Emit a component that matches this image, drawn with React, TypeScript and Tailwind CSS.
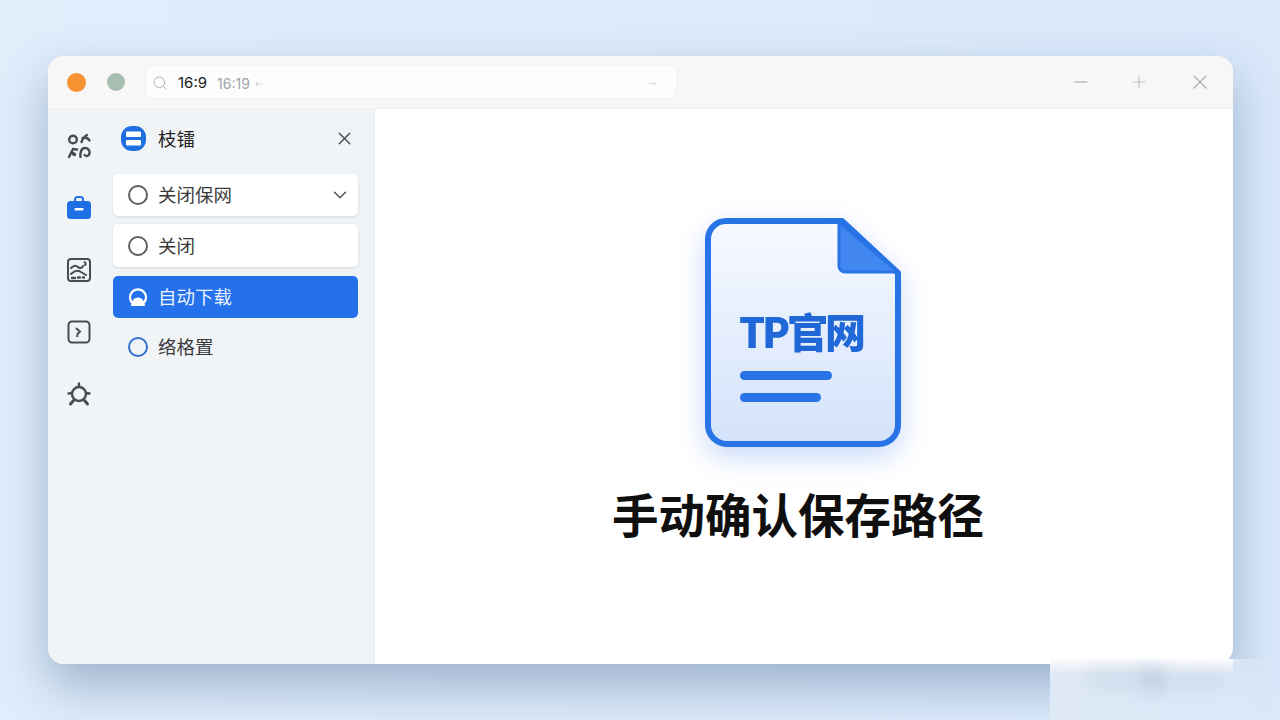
import { ChevronDown, Minus, Plus, Search, X } from 'lucide-react';

const cjk = { fontFamily: '"Noto Sans CJK SC", "Noto Sans", sans-serif' };

function Ring({ blue }: { blue?: boolean }) {
  return (
    <span
      className={
        blue
          ? 'h-5 w-5 shrink-0 rounded-full border-2 border-[#2f6fd0]'
          : 'h-5 w-5 shrink-0 rounded-full border-2 border-[#5f5f5f]'
      }
    />
  );
}

function RailIcons() {
  return (
    <div className="flex flex-col items-center gap-[36px] pt-[24px] pr-[4px] text-[#484b50]">
      <svg width="26" height="26" viewBox="0 0 26 26" fill="none" stroke="currentColor" strokeWidth="2.4" strokeLinecap="round">
        <circle cx="7" cy="6.500" r="3.800" />
        <path d="M15.500 9c1-3 3-5.500 5.500-7M16.500 5c3-.5 6 .5 7 2.500" />
        <path d="M3 24l4-8 4 .5" />
        <path d="M7 20.500l1.500 1" strokeWidth="3.400" />
        <path d="M14.500 24c-.5-4 .5-9 4.500-9 3 0 5 2.500 4.500 5.500s-3.500 3-5 1.500" />
      </svg>
      <svg width="26" height="26" viewBox="0 0 26 26" fill="none">
        <path d="M9 7V4.500A2.500 2.500 0 0 1 11.500 2h3A2.500 2.500 0 0 1 17 4.500V7" stroke="#1f6fe5" strokeWidth="2.200" />
        <rect x="1" y="6" width="24" height="18" rx="3.500" fill="#1f6fe5" />
        <rect x="8.500" y="13" width="9" height="2.600" rx="1" fill="#fff" />
      </svg>
      <svg width="26" height="26" viewBox="0 0 26 26" fill="none" stroke="currentColor" strokeWidth="2" strokeLinecap="round">
        <rect x="2" y="2" width="22" height="22" rx="3" />
        <path d="M5 11c3-3 5-3 7-1s4 1 5-1M18.500 5c1.500 1 1.500 2.500.5 3M5 17c3-3 7-4 10-2l5 3" />
        <path d="M6 21h3M12 20.500h2M17 20.500h1" strokeWidth="2.400" />
      </svg>
      <svg width="26" height="26" viewBox="0 0 26 26" fill="none" stroke="currentColor" strokeWidth="2" strokeLinecap="round">
        <rect x="2.500" y="2.500" width="21" height="21" rx="3.500" />
        <path d="M10.500 9.500l3.500 3-2.500 2.500M11 17h.5" />
      </svg>
      <svg width="26" height="26" viewBox="0 0 26 26" fill="none" stroke="currentColor" strokeLinecap="round">
        <circle cx="13" cy="13" r="7" strokeWidth="2.400" />
        <path d="M13 2.500v3M2.500 12.500l3.500-.5M23.500 12.500l-3.500-.5" strokeWidth="2.400" />
        <path d="M4.500 23l3-3.500M21.500 23l-3-3.500" strokeWidth="3" />
      </svg>
    </div>
  );
}

function DocIcon() {
  return (
    <svg width="196" height="229" viewBox="0 0 196 229" className="drop-shadow-[0_10px_14px_rgba(60,120,235,0.28)]">
      <defs>
        <linearGradient id="page" x1="0" y1="0" x2="0" y2="1">
          <stop offset="0" stopColor="#f7faff" />
          <stop offset="1" stopColor="#d3e2fa" />
        </linearGradient>
      </defs>
      <path
        d="M21 3H137L193 55V207a19 19 0 0 1-19 19H22A19 19 0 0 1 3 207V21A18 18 0 0 1 21 3Z"
        fill="url(#page)"
        stroke="#2874e6"
        strokeWidth="6"
        strokeLinejoin="round"
      />
      <path d="M134 4L193 54H140a6 6 0 0 1-6-6Z" fill="#4287f0" stroke="#2874e6" strokeWidth="3" strokeLinejoin="round" />
      <text x="34" y="130" fontSize="41" fontWeight="900" fill="#2068d8" style={cjk} textLength="127">
        TP官网
      </text>
      <rect x="35" y="153" width="92" height="9" rx="4.500" fill="#2874e6" />
      <rect x="35" y="175" width="81" height="9" rx="4.500" fill="#2874e6" />
    </svg>
  );
}

export default function App() {
  return (
    <div className="relative h-[720px] w-[1280px] overflow-hidden bg-[linear-gradient(100deg,#e0edfb,#d9e8fa)] pt-[56px] pl-[48px]">
      <div className="flex h-[608px] w-[1185px] flex-col overflow-hidden rounded-[16px] bg-white shadow-[0_22px_48px_rgba(70,100,140,0.42)]">
        <header className="flex h-[53px] shrink-0 items-center border-b border-[#ededed] bg-[#f7f7f7]">
          <span className="ml-[19px] h-[19px] w-[19px] rounded-full bg-[#f59231]" />
          <span className="ml-[21px] h-[18px] w-[18px] rounded-full bg-[#a7bfb1]" />
          <div className="ml-[21px] flex h-[32px] w-[530px] items-center rounded-[8px] bg-[#fdfdfd] pl-[6px] shadow-[0_0_4px_rgba(0,0,0,0.03)]">
            <Search size={16} strokeWidth={1.4} className="mt-[2px] text-[#a9adb1]" />
            <span className="mt-[2px] ml-[10px] text-[15px] text-[#1c1c1c]" style={{ fontFamily: 'Inter, sans-serif' }}>
              16:9
            </span>
            <span className="mt-[2px] ml-[10px] text-[14px] text-[#a0a4a8]" style={{ fontFamily: 'Inter, sans-serif' }}>
              16:19
            </span>
            <span className="mt-[2px] ml-[5px] text-[10px] text-[#c8cbce]">⇠</span>
            <span className="mr-[18px] ml-auto text-[13px] text-[#d0d0d0]">→</span>
          </div>
          <Minus size={20} strokeWidth={1.7} className="ml-[395px] text-[#bdbdbd]" />
          <Plus size={20} strokeWidth={1.4} className="ml-[38px] text-[#c4c4c4]" />
          <X size={24} strokeWidth={1.5} className="ml-[39px] text-[#b4b4b4]" />
        </header>

        <div className="flex min-h-0 flex-1">
          <aside className="flex w-[327px] shrink-0 border-r border-[#e9ebed] bg-[#f1f4f7]" style={cjk}>
            <div className="flex w-[65px] shrink-0 justify-center">
              <RailIcons />
            </div>
            <div className="w-[245px] shrink-0">
              <div className="flex h-[65px] items-center pr-[5px] pl-[8px]">
                <svg width="25" height="25" viewBox="0 0 25 25" className="mb-[6px]">
                  <rect width="25" height="25" rx="11" fill="#1f6fe0" />
                  <rect x="5" y="5.500" width="15" height="5.500" rx="1" fill="#fff" />
                  <rect x="5" y="14" width="15" height="5.500" rx="1" fill="#fff" />
                </svg>
                <span className="mb-[7px] ml-[12px] text-[18.500px] leading-none font-normal text-[#222]">枝镭</span>
                <X size={21} strokeWidth={1.6} className="mr-[-2px] mb-[6px] ml-auto text-[#4a4a4a]" />
              </div>
              <div className="flex flex-col gap-[8px]">
                <div className="flex h-[42px] items-center gap-[10px] rounded-[5px] bg-white pr-[7px] pl-[15px] text-[18.500px] text-[#3a3a3a] shadow-[0_1px_3px_rgba(0,0,0,0.12)]">
                  <Ring />
                  <span>关闭保网</span>
                  <ChevronDown size={22} strokeWidth={1.6} className="ml-auto text-[#555]" />
                </div>
                <div className="flex h-[43px] items-center gap-[10px] rounded-[5px] bg-white pl-[15px] text-[18.500px] text-[#3a3a3a] shadow-[0_1px_3px_rgba(0,0,0,0.12)]">
                  <Ring />
                  <span>关闭</span>
                </div>
                <div className="mt-[1px] flex h-[42px] items-center gap-[10px] rounded-[5px] bg-[#2471eb] pl-[15px] text-[18.500px] text-[#eaf2ff]">
                  <svg width="20" height="20" viewBox="0 0 20 20" className="shrink-0">
                    <path d="M3.500 15A8 8 0 1 1 16.500 15" fill="none" stroke="#fff" strokeWidth="2.200" strokeLinecap="round" />
                    <path d="M3 19c.5-5 3-8.500 7-8.500s6.500 3.500 7 8.500Z" fill="#fff" />
                  </svg>
                  <span>自动下载</span>
                </div>
                <div className="flex h-[42px] items-center gap-[10px] pl-[15px] text-[18.500px] text-[#3a3a3a]">
                  <Ring blue />
                  <span>络格置</span>
                </div>
              </div>
            </div>
          </aside>

          <main className="flex flex-1 flex-col items-center pt-[109px] pr-[2px]">
            <DocIcon />
            <h1 className="mt-[37px] mr-[10px] text-[46.500px] leading-[58px] font-bold text-[#0f0f0f]" style={cjk}>
              手动确认保存路径
            </h1>
          </main>
        </div>
      </div>

      {/* blurred patch over the bottom right corner */}
      <div className="absolute top-[659px] left-[1050px] h-[61px] w-[230px] overflow-hidden bg-[linear-gradient(90deg,#dfe9f6_0%,#dce9f8_78%,transparent_100%)]">
        <div className="h-[14px] w-[183px] bg-[linear-gradient(180deg,#fbfcfd,#e3ebf5)]" />
        <div className="absolute top-[8px] left-[40px] h-[22px] w-[70px] bg-[#b9c8da]/35 blur-[9px]" />
        <div className="absolute top-[8px] left-[92px] h-[26px] w-[26px] bg-[#a7b8cc]/35 blur-[8px]" />
        <div className="absolute top-[12px] left-[125px] h-[20px] w-[50px] bg-[#bccbdc]/40 blur-[8px]" />
      </div>
    </div>
  );
}
